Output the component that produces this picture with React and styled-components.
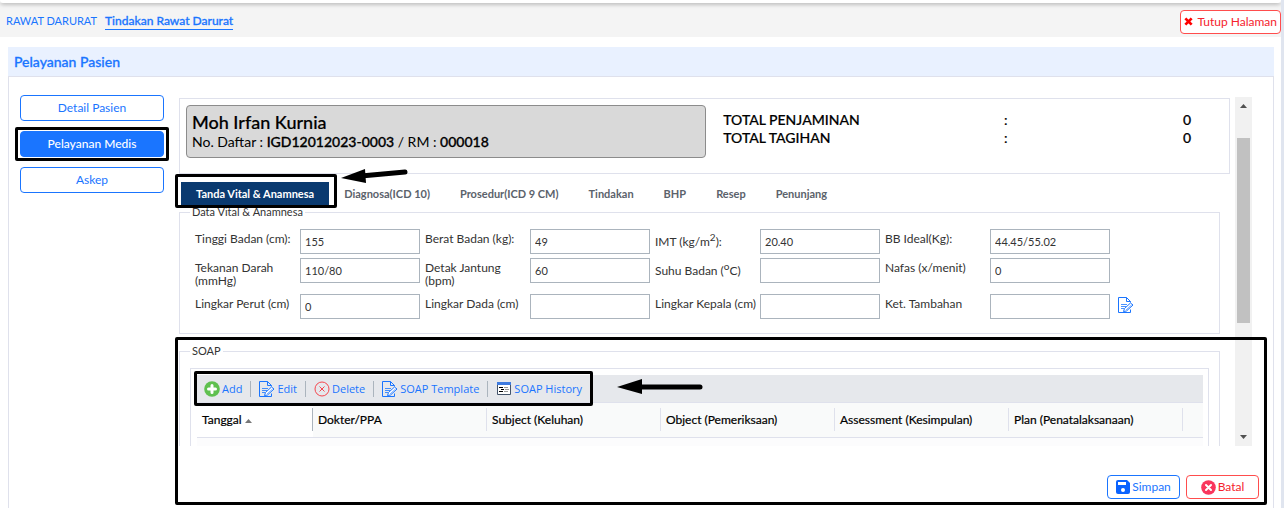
import { useState } from "react";
import styled, { createGlobalStyle, css } from "styled-components";

// ─── Estilos ──────────────────────────────────────────────────────────────

const blue = "#1a75ff";
const line = "#dfe1ec";

const GlobalStyle = createGlobalStyle`
  * { box-sizing: border-box; }

  body {
    margin: 0;
    background: #fff;
    color: #333;
    font-family: Lato, "Noto Sans", sans-serif;
    font-size: 12px;
    overflow: hidden;
  }

  button, input {
    font-family: inherit;
  }

  svg { flex: none; }
`;

const Page = styled.div`
  height: 100vh;
  display: flex;
  flex-direction: column;
  border-right: 3px solid #e0e5ef;
  overflow: hidden;
`;

const TopEdge = styled.div`
  flex: none;
  height: 3px;
  background: #fff;
  border-radius: 0 0 8px 8px;
  box-shadow: 0 1px 4px rgba(0, 0, 0, 0.35);
  z-index: 1;
`;

const Header = styled.header`
  flex: none;
  height: 34px;
  display: flex;
  align-items: center;
  justify-content: space-between;
  padding: 3px 0 0 6px;
  background: #f4f4f4;
`;

const Crumbs = styled.nav`
  display: flex;
  align-items: center;
  gap: 8px;
`;

const Crumb = styled.a`
  color: ${blue};
  font-size: 11px;
  line-height: 16px;
  text-decoration: none;
  border-bottom: 1px solid transparent;

  ${(p) =>
    p.$current &&
    css`
      font-size: 12px;
      font-weight: 500;
      -webkit-text-stroke: 0.3px ${blue};
      border-bottom-color: ${blue};
    `}
`;

const OutlineBtn = styled.button`
  height: 24px;
  min-width: ${(p) => (p.$wide ? "73px" : "0")};
  padding: 0 3px;
  display: flex;
  align-items: center;
  justify-content: center;
  gap: ${(p) => (p.$wide ? "2px" : "4px")};
  background: #fff;
  border: 1px solid ${(p) => (p.$danger ? "#ff4d4d" : blue)};
  border-radius: 4px;
  color: ${(p) => (p.$danger ? "#f5222d" : blue)};
  font-size: 12px;
  line-height: 20px;
  cursor: pointer;
`;

const Panel = styled.section`
  flex: 1;
  min-height: 0;
  margin: 10px 7px 0 8px;
  display: flex;
  flex-direction: column;
`;

const PanelTitle = styled.h1`
  flex: none;
  height: 29px;
  margin: 0;
  padding: 0 6px;
  background: #e9f1ff;
  color: ${blue};
  font-size: 14px;
  font-weight: 500;
  line-height: 29px;
  -webkit-text-stroke: 0.3px ${blue};
`;

const PanelBody = styled.div`
  flex: 1;
  min-height: 0;
  display: flex;
  gap: 6px;
  padding: 0 6px 0 11px;
  border: 1px solid ${line};
  border-bottom: none;
`;

const Sidebar = styled.div`
  flex: none;
  width: 144px;
  padding-top: 18px;
  display: flex;
  flex-direction: column;
  gap: 10px;
`;

const SideBtn = styled.button`
  position: relative;
  height: 26px;
  padding: 0 0 2px;
  border: 1px solid ${blue};
  border-radius: 4px;
  background: ${(p) => (p.$active ? blue : "#fff")};
  color: ${(p) => (p.$active ? "#fff" : blue)};
  font-size: 12px;
  font-weight: ${(p) => (p.$active ? 500 : 400)};
  cursor: pointer;
`;

// moldura preta que destaca uma área da tela
const Marker = styled.span`
  position: absolute;
  inset: ${(p) => p.$inset};
  border: 3px solid #000;
  border-radius: 2px;
  pointer-events: none;
  z-index: 3;
`;

const Arrow = styled.svg`
  position: absolute;
  left: 100%;
  top: ${(p) => p.$top};
  margin-left: ${(p) => p.$gap};
  z-index: 3;
`;

const Main = styled.main`
  position: relative;
  flex: 1;
  min-width: 0;
  padding: 20px 15px 0 0;
`;

const Viewport = styled.div`
  display: flex;
  height: 349px;
  overflow: hidden;
`;

const Content = styled.div`
  flex: 1;
  min-width: 0;
  padding: 1px 5px 0 9px;
`;

const PatientBox = styled.div`
  height: 76px;
  padding: 6px;
  display: grid;
  grid-template-columns: 51fr 49fr;
  align-items: start;
  gap: 17px;
  border: 1px solid ${line};
`;

const PatientCard = styled.div`
  height: 53px;
  padding: 6px 5px;
  background: #d9d9d9;
  border: 1px solid #8c8c8c;
  border-radius: 4px;
  color: #000;
  font-size: 14px;
  line-height: 18px;

  b { font-weight: 500; -webkit-text-stroke: 0.3px #000; }
`;

const PatientName = styled.h2`
  margin: 0;
  font-size: 18px;
  font-weight: 500;
  line-height: 21px;
  -webkit-text-stroke: 0.2px #000;
`;

const Totals = styled.dl`
  margin: 0;
  padding: 6px 32px 0 0;
  display: grid;
  grid-template-columns: 3fr 1fr 1fr;
  color: #000;
  font-size: 14px;
  font-weight: 500;
  line-height: 18px;
  -webkit-text-stroke: 0.2px #000;

  dt, dd { margin: 0; }
  dd:nth-of-type(even) { text-align: right; }
`;

const Tabs = styled.div`
  height: 23px;
  margin: 8px 0 0 2px;
  display: flex;
`;

const Tab = styled.button`
  position: relative;
  padding: 0 15px;
  border: none;
  background: ${(p) => (p.$active ? "#0a3a70" : "transparent")};
  color: ${(p) => (p.$active ? "#fff" : "#5b626b")};
  font-size: 11px;
  font-weight: 700;
  line-height: 22px;
  white-space: nowrap;
  cursor: pointer;
`;

const Fieldset = styled.fieldset`
  min-width: 0;
  margin: 0 10px 0 0;
  padding: 10px 10px ${(p) => (p.$flush ? "0" : "14px")};
  border: 1px solid ${line};

  & + & { margin-top: 10px; }
`;

const Legend = styled.legend`
  padding: 0 2px;
  font-size: 11px;
  line-height: 14px;
`;

const VitalGrid = styled.div`
  display: grid;
  grid-template-columns: repeat(4, 105px 125px) 20px;
  row-gap: 4px;
  align-items: start;
  padding-left: 5px;
`;

const VitalLabel = styled.label`
  padding: 3px 0;
  font-size: 12px;
  line-height: 13px;

  sup { font-size: 10px; line-height: 10px; }
`;

const VitalInput = styled.input`
  width: 120px;
  height: 25px;
  padding: 0 4px;
  border: 1px solid #abb4bd;
  border-radius: 0;
  color: #333;
  font-size: 11px;
`;

const IconBtn = styled.button`
  width: 20px;
  height: 22px;
  padding: 0 0 0 3px;
  display: flex;
  align-items: center;
  border: none;
  background: transparent;
  cursor: pointer;
`;

const GridBox = styled.div`
  padding: 6px 5px 0 6px;
  border: 1px solid ${line};
`;

const Toolbar = styled.div`
  position: relative;
  height: 28px;
  display: flex;
  background: #e6e8ec;
  border-bottom: 1px solid ${line};
`;

const ToolGroup = styled.div`
  position: relative;
  display: flex;
  align-items: center;
  padding: 0 11px 0 7px;
`;

const ToolBtn = styled.button`
  height: 16px;
  padding: 0;
  display: flex;
  align-items: center;
  gap: 2px;
  border: none;
  background: transparent;
  color: ${blue};
  font-family: "Open Sans", sans-serif;
  font-size: 11px;
  line-height: 16px;
  white-space: nowrap;
  cursor: pointer;

  & + & {
    margin-left: 8px;
    padding-left: 8px;
    border-left: 1px solid #abb4bd;
  }
`;

const Table = styled.table`
  width: 100%;
  table-layout: fixed;
  border-collapse: collapse;
  background: #f9fafa;
  color: #000;

  tr { border-bottom: 1px solid ${line}; }
  tbody tr { height: 26px; background: #fcfcfd; }
`;

const Th = styled.th`
  width: ${(p) => p.$width};
  height: 34px;
  padding: 5px 0;
  font-size: 12px;
  font-weight: 400;
  text-align: left;
  background: ${(p) => (p.$sorted ? "#fff" : "transparent")};

  span {
    display: block;
    padding-left: 5px;
    line-height: 23px;
    white-space: nowrap;
    border-right: 1px solid ${(p) => (p.$sorted ? "#abb4bd" : line)};
    -webkit-text-stroke: 0.2px #000;
  }
`;

const ScrollTrack = styled.div`
  flex: none;
  width: 17px;
  display: flex;
  flex-direction: column;
  align-items: center;
  background: #f1f1f1;
`;

const ScrollArrow = styled.svg`
  width: 17px;
  height: 18px;
`;

const ScrollRail = styled.div`
  flex: 1;
  width: 13px;
  padding-top: 23px;
`;

const ScrollThumb = styled.div`
  height: 185px;
  background: #c1c1c1;
`;

const Footer = styled.footer`
  display: flex;
  justify-content: flex-end;
  gap: 6px;
  margin-top: 29px;
  margin-right: -7px;
`;

// ─── Ícones ───────────────────────────────────────────────────────────────

function CloseIcon() {
  return (
    <svg width="9" height="9" viewBox="0 0 10 10">
      <path d="m1.500 1.500 7 7M8.500 1.500l-7 7" stroke="#f00" strokeWidth="3" />
    </svg>
  );
}

function EditIcon() {
  return (
    <svg width="16" height="16" viewBox="0 0 16 16" fill="none" stroke={blue}>
      <path d="M12.500 12.500v3H.5V.5h8l4 4v1M8.500.5v4h4" />
      <path d="M3 7.500h6M3 9.500h5M3 11.500h3" strokeOpacity="0.8" />
      <path d="m5.500 14.500 1-3 6-5.500 2.500 2-6.500 6z" fill="#fff" />
      <path d="m8 13 5.500-5" strokeOpacity="0.6" />
    </svg>
  );
}

function AddIcon() {
  return (
    <svg width="16" height="16" viewBox="0 0 16 16">
      <circle cx="8" cy="8" r="7.800" fill="#5fc04f" />
      <path d="M8 4.500v7M4.500 8h7" stroke="#fff" strokeWidth="3" strokeLinecap="round" />
    </svg>
  );
}

function DeleteIcon() {
  return (
    <svg width="16" height="16" viewBox="0 0 16 16" fill="none" stroke="#f5474f">
      <circle cx="8" cy="8" r="7" />
      <path d="m5.500 5.500 5 5M10.500 5.500l-5 5" />
    </svg>
  );
}

function HistoryIcon() {
  return (
    <svg width="16" height="13" viewBox="0 0 16 13">
      <path d="M1.500.5h13v12h-13z" fill="#fff" stroke="#44546a" />
      <path d="M1 0h14v3H1z" fill="#3f7be0" />
      <path d="M3 5.500h4M5 7.500h3M3 9.500h4" stroke="#000" />
      <path d="M8 5.500h4M9 7.500h4M8 9.500h4" stroke="#999" />
    </svg>
  );
}

function SaveIcon() {
  return (
    <svg width="14" height="14" viewBox="0 0 14 14">
      <path d="M2 0h9l3 3v9a2 2 0 0 1-2 2H2a2 2 0 0 1-2-2V2a2 2 0 0 1 2-2z" fill="#0a63ff" />
      <path d="M2 2h8v3H2z" fill="#fff" />
      <circle cx="7" cy="10" r="2" fill="#fff" />
    </svg>
  );
}

function CancelIcon() {
  return (
    <svg width="15" height="15" viewBox="0 0 15 15">
      <circle cx="7.500" cy="7.500" r="7.300" fill="#f9365c" />
      <path d="m5 5 5 5M10 5l-5 5" stroke="#fff" strokeWidth="2" strokeLinecap="round" />
    </svg>
  );
}

// ─── Dados ────────────────────────────────────────────────────────────────

const menus = ["Detail Pasien", "Pelayanan Medis", "Askep"];

const tabs = [
  "Tanda Vital & Anamnesa",
  "Diagnosa(ICD 10)",
  "Prosedur(ICD 9 CM)",
  "Tindakan",
  "BHP",
  "Resep",
  "Penunjang",
];

const vitals = [
  { id: "tinggi", label: "Tinggi Badan (cm):", value: "155" },
  { id: "berat", label: "Berat Badan (kg):", value: "49" },
  { id: "imt", label: <>IMT (kg/m<sup>2</sup>):</>, value: "20.40" },
  { id: "ideal", label: "BB Ideal(Kg):", value: "44.45/55.02" },
  { id: "tekanan", label: "Tekanan Darah (mmHg)", value: "110/80" },
  { id: "detak", label: "Detak Jantung (bpm)", value: "60" },
  { id: "suhu", label: <>Suhu Badan (<sup>o</sup>C)</>, value: "" },
  { id: "nafas", label: "Nafas (x/menit)", value: "0" },
  { id: "perut", label: "Lingkar Perut (cm)", value: "0" },
  { id: "dada", label: "Lingkar Dada (cm)", value: "" },
  { id: "kepala", label: "Lingkar Kepala (cm)", value: "" },
  { id: "ket", label: "Ket. Tambahan", value: "" },
];

const tools = [
  { label: "Add", Icon: AddIcon },
  { label: "Edit", Icon: EditIcon },
  { label: "Delete", Icon: DeleteIcon },
  { label: "SOAP Template", Icon: EditIcon },
  { label: "SOAP History", Icon: HistoryIcon },
];

const columns = [
  "Dokter/PPA",
  "Subject (Keluhan)",
  "Object (Pemeriksaan)",
  "Assessment (Kesimpulan)",
  "Plan (Penatalaksanaan)",
];

// ─── Componentes ──────────────────────────────────────────────────────────

const VitalCell = styled.div`
  display: contents;

  &:nth-child(4n + 1) > label { grid-column-start: 1; }
`;

function VitalFields() {
  const [values, setValues] = useState(() =>
    Object.fromEntries(vitals.map((v) => [v.id, v.value]))
  );

  return (
    <VitalGrid>
      {vitals.map((v) => (
        <VitalCell key={v.id}>
          <VitalLabel htmlFor={v.id}>{v.label}</VitalLabel>
          <VitalInput
            id={v.id}
            value={values[v.id]}
            onChange={(e) => setValues({ ...values, [v.id]: e.target.value })}
          />
        </VitalCell>
      ))}
      <IconBtn type="button" aria-label="Edit">
        <EditIcon />
      </IconBtn>
    </VitalGrid>
  );
}

function SoapGrid() {
  return (
    <GridBox>
      <Toolbar>
        <ToolGroup>
          {tools.map(({ label, Icon }) => (
            <ToolBtn key={label} type="button">
              <Icon />
              {label}
            </ToolBtn>
          ))}
          <Marker $inset="-4px 0 -4px -3px" />
          <Arrow $top="4px" $gap="24px" width="88" height="16" viewBox="0 0 88 16">
            <path d="M0 8 25 0v15z" />
            <path d="M20 8h63" stroke="#000" strokeWidth="5" strokeLinecap="round" />
          </Arrow>
        </ToolGroup>
      </Toolbar>
      <Table>
        <thead>
          <tr>
            <Th $width="116px" $sorted>
              <span>
                Tanggal{" "}
                <svg width="7" height="5" viewBox="0 0 7 5">
                  <path d="M0 4 3.500 0 7 4z" fill="#777" />
                </svg>
              </span>
            </Th>
            {columns.map((c) => (
              <Th key={c} $width="174px">
                <span>{c}</span>
              </Th>
            ))}
            <td />
          </tr>
        </thead>
        <tbody>
          <tr>
            <td colSpan={7} />
          </tr>
        </tbody>
      </Table>
    </GridBox>
  );
}

export default function App() {
  const [menu, setMenu] = useState("Pelayanan Medis");
  const [tab, setTab] = useState(tabs[0]);

  return (
    <Page>
      <GlobalStyle />
      <TopEdge />
      <Header>
        <Crumbs>
          <Crumb href="#">RAWAT DARURAT</Crumb>
          <Crumb href="#" $current>Tindakan Rawat Darurat</Crumb>
        </Crumbs>
        <OutlineBtn type="button" $danger>
          <CloseIcon />
          Tutup Halaman
        </OutlineBtn>
      </Header>

      <Panel>
        <PanelTitle>Pelayanan Pasien</PanelTitle>
        <PanelBody>
          <Sidebar>
            {menus.map((m) => (
              <SideBtn key={m} type="button" $active={m === menu} onClick={() => setMenu(m)}>
                {m}
                {m === menu && <Marker $inset="-5px -6px" />}
              </SideBtn>
            ))}
          </Sidebar>

          <Main>
            <Viewport>
              <Content>
                <PatientBox>
                  <PatientCard>
                    <PatientName>Moh Irfan Kurnia</PatientName>
                    No. Daftar : <b>IGD12012023-0003</b> / RM : <b>000018</b>
                  </PatientCard>
                  <Totals>
                    <dt>TOTAL PENJAMINAN</dt>
                    <dd>:</dd>
                    <dd>0</dd>
                    <dt>TOTAL TAGIHAN</dt>
                    <dd>:</dd>
                    <dd>0</dd>
                  </Totals>
                </PatientBox>

                <Tabs>
                  {tabs.map((t) => (
                    <Tab key={t} type="button" $active={t === tab} onClick={() => setTab(t)}>
                      {t}
                      {t === tab && (
                        <>
                          <Marker $inset="-8px -8px -3px -6px" />
                          <Arrow $top="-14px" $gap="12px" width="68" height="16" viewBox="0 0 68 16">
                            <path d="M0 10 24 1l1 14z" />
                            <path d="m20 8 44-4" stroke="#000" strokeWidth="5" strokeLinecap="round" />
                          </Arrow>
                        </>
                      )}
                    </Tab>
                  ))}
                </Tabs>

                <Fieldset>
                  <Legend>Data Vital &amp; Anamnesa</Legend>
                  <VitalFields />
                </Fieldset>

                <Fieldset $flush>
                  <Legend>SOAP</Legend>
                  <SoapGrid />
                </Fieldset>
              </Content>
              <ScrollTrack>
                <ScrollArrow viewBox="0 0 17 18">
                  <path d="m5 11 3.500-4 3.500 4z" fill="#505050" />
                </ScrollArrow>
                <ScrollRail>
                  <ScrollThumb />
                </ScrollRail>
                <ScrollArrow viewBox="0 0 17 18">
                  <path d="m5 7 3.500 4L12 7z" fill="#505050" />
                </ScrollArrow>
              </ScrollTrack>
            </Viewport>
            <Footer>
              <OutlineBtn type="button" $wide>
                <SaveIcon />
                Simpan
              </OutlineBtn>
              <OutlineBtn type="button" $danger $wide>
                <CancelIcon />
                Batal
              </OutlineBtn>
            </Footer>
            <Marker $inset="260px 0 3px 5px" />
          </Main>
        </PanelBody>
      </Panel>
    </Page>
  );
}
